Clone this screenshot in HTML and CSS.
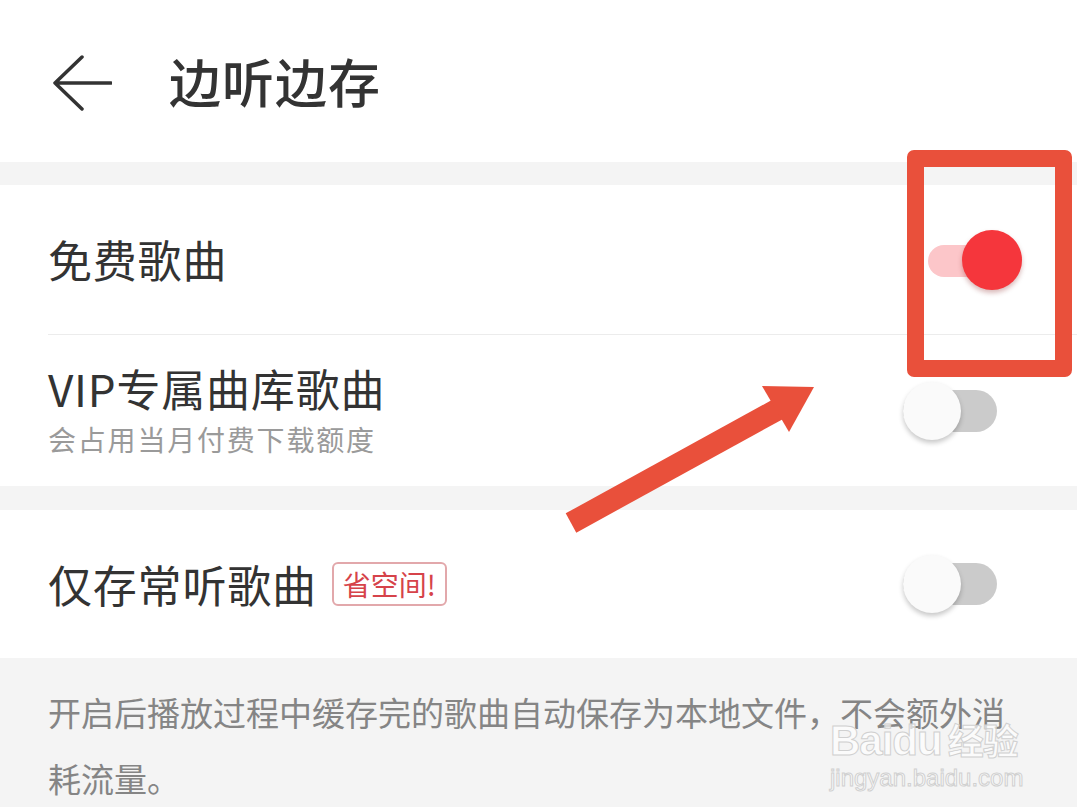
FILE: index.html
```html
<!DOCTYPE html>
<html lang="zh">
<head>
<meta charset="utf-8">
<title>边听边存</title>
<link rel="stylesheet" href="styles.css">
</head>
<body>
<div class="page">
  <header class="header">
    <svg class="back" width="60" height="56" viewBox="0 0 60 56">
      <path d="M30 2 L3 28 L30 54 M3 28 H59" fill="none" stroke="#333" stroke-width="3.5" stroke-linecap="round" stroke-linejoin="round"/>
    </svg>
    <h1 class="title">边听边存</h1>
  </header>
  <div class="band"></div>
  <section class="group">
    <div class="row row-first">
      <div class="label">免费歌曲</div>
      <div class="toggle toggle-on"><span class="knob"></span></div>
    </div>
    <div class="divider"></div>
    <div class="row row-second">
      <div class="label-wrap">
        <div class="label">VIP专属曲库歌曲</div>
        <div class="sub">会占用当月付费下载额度</div>
      </div>
      <div class="toggle"><span class="knob"></span></div>
    </div>
  </section>
  <div class="band band2"></div>
  <section class="group">
    <div class="row row-third">
      <div class="label-line">
        <span class="label">仅存常听歌曲</span>
        <span class="badge">省空间!</span>
      </div>
      <div class="toggle"><span class="knob"></span></div>
    </div>
  </section>
  <footer class="footer">
    <p class="note">开启后播放过程中缓存完的歌曲自动保存为本地文件，不会额外消耗流量。</p>
    <div class="watermark">
      <div class="wm-logo">Baidu<span class="wm-cn">经验</span></div>
      <div class="wm-url">jingyan.baidu.com</div>
    </div>
  </footer>

  <div class="highlight"></div>
  <svg class="arrow" width="1077" height="807" viewBox="0 0 1077 807">
    <line x1="571" y1="523" x2="782" y2="407" stroke="#e9503b" stroke-width="22"/>
    <polygon points="814,387 762,386 789,432" fill="#e9503b"/>
  </svg>
</div>
</body>
</html>
```
FILE: styles.css
```css
* { box-sizing: border-box; }
html, body {
  margin: 0;
  padding: 0;
  background: #f4f4f4;
}
body {
  width: 1077px;
  height: 807px;
  overflow: hidden;
  font-family: "Noto Sans CJK SC", "Noto Sans", sans-serif;
  color: #333;
}
.page {
  position: relative;
  width: 1077px;
  height: 807px;
}
.header {
  height: 162px;
  background: #fff;
  display: flex;
  align-items: center;
  padding-left: 52px;
}
.back {
  display: block;
  margin-top: 3px;
}
.title {
  margin: 0 0 0 57px;
  font-size: 52px;
  font-weight: 500;
  color: #333;
  line-height: 1;
  letter-spacing: 1px;
}
.band {
  height: 23px;
  background: #f4f4f4;
}
.band2 {
  height: 24px;
}
.group {
  background: #fff;
}
.row {
  display: flex;
  align-items: center;
  justify-content: space-between;
  padding-left: 48px;
  padding-right: 80px;
}
.row-first { height: 149px; }
.row-second { height: 151px; }
.row-third { height: 148px; }
.divider {
  height: 1px;
  margin-left: 48px;
  background: #ececec;
}
.label {
  font-size: 44px;
  color: #333;
  line-height: 1.1;
  letter-spacing: 0.8px;
}
.label-wrap {
  display: flex;
  flex-direction: column;
  gap: 11px;
  margin-top: -1px;
}
.sub {
  font-size: 28px;
  color: #9a9a9a;
  line-height: 1.2;
  letter-spacing: 1.8px;
}
.label-line {
  display: flex;
  align-items: center;
}
.badge {
  margin-left: 15px;
  height: 44px;
  padding: 0 9px;
  display: inline-flex;
  align-items: center;
  border: 2px solid #e2a8ab;
  border-radius: 6px;
  color: #d6434a;
  font-size: 28px;
  line-height: 1;
}
.toggle {
  position: relative;
  width: 94px;
  height: 42px;
  border-radius: 21px;
  background: #cbcbcb;
}
.toggle .knob {
  position: absolute;
  left: 0;
  top: -8px;
  width: 58px;
  height: 58px;
  border-radius: 50%;
  background: #fafafa;
  box-shadow: 0 3px 5px rgba(0,0,0,0.22);
}
.toggle-on {
  margin-right: -25px;
  height: 32px;
  background: #fcc6c9;
  margin-top: 2px;
}
.toggle-on .knob {
  left: auto;
  right: 0;
  top: -15px;
  width: 60px;
  height: 60px;
  background: #f5363c;
  box-shadow: 0 3px 5px rgba(120,0,0,0.28);
}
.footer {
  position: relative;
  padding: 21px 49px 0 48px;
  background: #f4f4f4;
  height: 149px;
}
.note {
  margin: 0;
  font-size: 33px;
  line-height: 66px;
  color: #858585;
}
.watermark {
  position: absolute;
  left: 830px;
  top: 62px;
  color: rgba(255,255,255,0.7);
  font-family: "Liberation Sans", "Noto Sans CJK SC", sans-serif;
  -webkit-text-stroke: 1px #d0d0d0;
  line-height: 1;
}
.wm-logo {
  font-size: 42px;
  font-weight: bold;
  letter-spacing: -1px;
}
.wm-cn {
  font-family: "Noto Sans CJK SC", sans-serif;
  font-size: 36px;
  margin-left: 6px;
}
.wm-url {
  font-size: 24px;
  margin-top: 4px;
}
.highlight {
  position: absolute;
  left: 907px;
  top: 150px;
  width: 165px;
  height: 227px;
  border: 17px solid #e9503b;
  border-radius: 7px;
}
.arrow {
  position: absolute;
  left: 0;
  top: 0;
  pointer-events: none;
}
```
